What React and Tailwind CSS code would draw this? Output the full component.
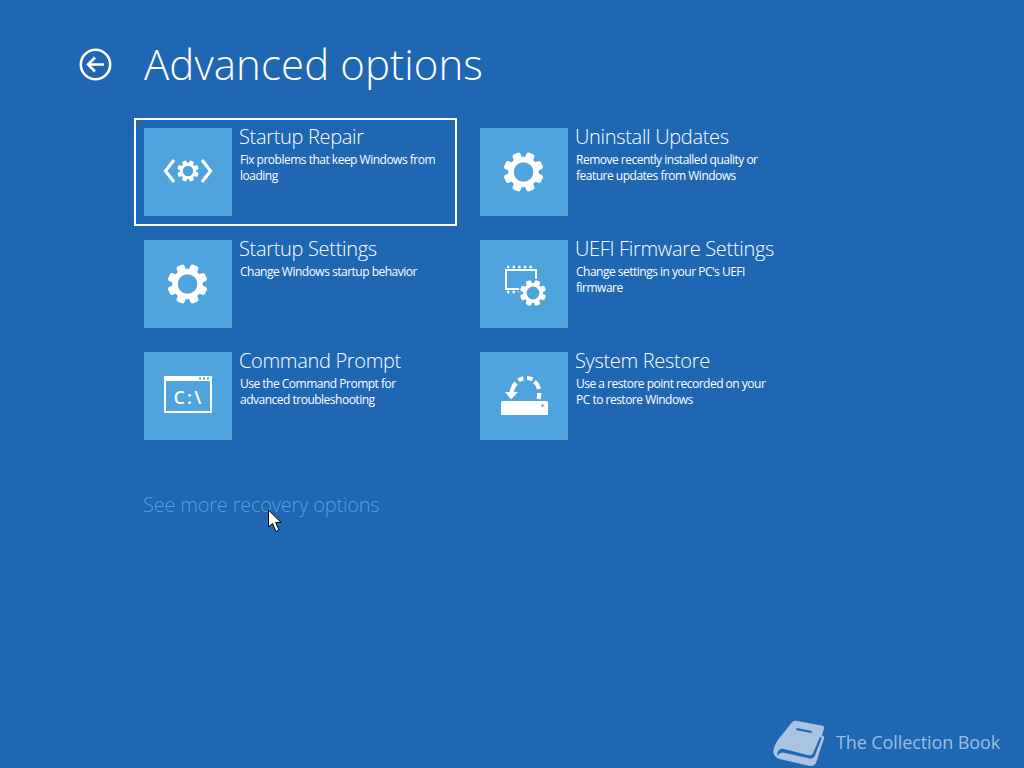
import React from "react";

const font = { fontFamily: '"Open Sans", "Noto Sans", sans-serif' };

// gear drawn around (cx, cy), r = outer radius of the teeth
const Gear = ({ cx, cy, r }) => {
  const teeth = [0, 45, 90, 135, 180, 225, 270, 315];
  return (
    <g transform={`translate(${cx} ${cy}) scale(${r / 19})`} fill="white">
      <circle r="12.2" fill="none" stroke="white" strokeWidth="5.4" />
      {teeth.map((a) => (
        <rect key={a} x="-4.2" y="-19.5" width="8.4" height="8" rx="2.4" transform={`rotate(${a + 22.5})`} />
      ))}
    </g>
  );
};

const RepairIcon = () => (
  <svg width="88" height="88" viewBox="0 0 88 88">
    <Gear cx={44} cy={43} r={10.5} />
    <path d="M30 32 L21.5 43 L30 54" fill="none" stroke="white" strokeWidth="3.2" />
    <path d="M58 32 L66.5 43 L58 54" fill="none" stroke="white" strokeWidth="3.2" />
  </svg>
);

const GearIcon = () => (
  <svg width="88" height="88" viewBox="0 0 88 88">
    <Gear cx={43.5} cy={44} r={19.5} />
  </svg>
);

const PromptIcon = () => (
  <svg width="88" height="88" viewBox="0 0 88 88">
    <rect x="21" y="25" width="46" height="35" fill="none" stroke="white" strokeWidth="2" />
    <rect x="20" y="24" width="48" height="5" fill="white" />
    <rect x="55" y="25.5" width="2" height="2" fill="#4fa4dd" />
    <rect x="59" y="25.5" width="2" height="2" fill="#4fa4dd" />
    <rect x="63" y="25.5" width="2" height="2" fill="#4fa4dd" />
    <text x="29.5" y="51.5" fontSize="18" fontWeight="600" fill="white" letterSpacing="2.2" fontFamily='"Open Sans", sans-serif'>C:\</text>
  </svg>
);

const FirmwareIcon = () => (
  <svg width="88" height="88" viewBox="0 0 88 88">
    <rect x="26" y="30" width="30" height="19" fill="none" stroke="white" strokeWidth="2" />
    <path d="M27 27 H55" stroke="white" strokeWidth="2.4" strokeDasharray="2.4 3.2" />
    <path d="M27 52 H41" stroke="white" strokeWidth="2.4" strokeDasharray="2.4 3.2" />
    <circle cx="53" cy="53" r="14.5" fill="#4fa4dd" />
    <Gear cx={53} cy={53} r={12.8} />
  </svg>
);

const RestoreIcon = () => (
  <svg width="88" height="88" viewBox="0 0 88 88">
    <path d="M23 49 H66 Q68 49 68 51 V63 H21 V51 Q21 49 23 49 Z" fill="white" />
    <circle cx="62.5" cy="53.5" r="1.3" fill="#4fa4dd" />
    <path d="M31.5 41 Q32.5 35 36 31" fill="none" stroke="white" strokeWidth="4.2" />
    <path d="M38.5 28.5 Q40.5 27 43.5 26.3" fill="none" stroke="white" strokeWidth="4.2" />
    <path d="M47 26 Q50 26 52.5 27.3" fill="none" stroke="white" strokeWidth="4.2" />
    <path d="M54.5 29.5 Q58 32.5 59 37" fill="none" stroke="white" strokeWidth="4.2" />
    <path d="M59.3 41 Q59.3 44 58.5 47" fill="none" stroke="white" strokeWidth="4.2" />
    <path d="M25 40 H38 L31 47.5 Z" fill="white" />
  </svg>
);

const options = [
  { title: "Startup Repair", text: "Fix problems that keep Windows from loading", icon: <RepairIcon />, focused: true },
  { title: "Uninstall Updates", text: "Remove recently installed quality or feature updates from Windows", icon: <GearIcon /> },
  { title: "Startup Settings", text: "Change Windows startup behavior", icon: <GearIcon /> },
  { title: "UEFI Firmware Settings", text: "Change settings in your PC's UEFI firmware", icon: <FirmwareIcon /> },
  { title: "Command Prompt", text: "Use the Command Prompt for advanced troubleshooting", icon: <PromptIcon /> },
  { title: "System Restore", text: "Use a restore point recorded on your PC to restore Windows", icon: <RestoreIcon /> },
];

const OptionCard = ({ option }) => (
  <div className={`flex h-[108px] border-2 p-2 ${option.focused ? "border-white" : "border-transparent"}`}>
    <div className="w-[88px] h-[88px] shrink-0 bg-[#4fa4dd]">{option.icon}</div>
    <div className="ml-[7px] w-[201px] text-white">
      <div className="text-[20px] leading-[20px] font-light tracking-[-0.32px] -mt-[1px] whitespace-nowrap">{option.title}</div>
      <div className="mt-[5px] pl-px text-[12px] leading-[16px] tracking-[-0.5px]">{option.text}</div>
    </div>
  </div>
);

export default function App() {
  return (
    <div className="relative w-[1024px] h-[768px] overflow-hidden bg-[#1f66b3] pt-[36px]" style={font}>
      <div className="flex items-center pl-[78px] h-[58px]">
        <svg width="35" height="35" viewBox="0 0 35 35" className="-mt-[2px]">
          <circle cx="17.5" cy="17.5" r="14.7" fill="none" stroke="white" strokeWidth="2.6" />
          <path d="M10 17.5 H26 M17 10.5 L10 17.5 L17 24.5" fill="none" stroke="white" strokeWidth="2.6" />
        </svg>
        <h1 className="ml-[31px] -mt-[2px] text-[42px] leading-[58px] font-light tracking-[0.08px] text-white">Advanced options</h1>
      </div>
      <div className="ml-[134px] mt-[24px] w-[659px] grid grid-cols-[323px_323px] gap-x-[13px] gap-y-[4px]">
        {options.map((option) => (
          <OptionCard key={option.title} option={option} />
        ))}
      </div>
      <div className="ml-[143px] mt-[41px] text-[20px] leading-[28px] font-light tracking-[-0.2px] text-[#4fa4dd]">See more recovery options</div>

      {/* mouse pointer */}
      <svg className="absolute left-[267px] top-[509px]" width="16" height="24" viewBox="0 0 16 24">
        <path d="M1.5 1 V18 L5.5 14.5 L9 22.5 L12 21 L8.7 13.5 H14 Z" fill="white" stroke="black" strokeWidth="1" />
      </svg>

      {/* watermark */}
      <div className="absolute left-[770px] top-[716px] flex items-center">
        <svg width="60" height="52" viewBox="0 0 180 156" fill="#a9c4e3">
          <path d="M78 14 L158 29 Q165 31 162 38 L156 58 L163 64 L140 135 Q135 152 120 150 L32 130 Q10 125 10 105 Q12 90 25 70 L65 20 Q70 13 78 14 Z" />
          <path d="M22 112 Q26 96 42 99 L116 118 Q126 120 130 110 L150 62 L155 66 L134 120 Q128 130 116 127 L42 110 Q30 108 22 120 Z" fill="#1f66b3" />
          <path d="M80 36 L126 45 L124 51 L78 42 Z" fill="#1f66b3" />
        </svg>
        <span className="ml-[6px] text-[18px] leading-[24px] tracking-[-0.1px] text-[#9dbde0]">The Collection Book</span>
      </div>
    </div>
  );
}
